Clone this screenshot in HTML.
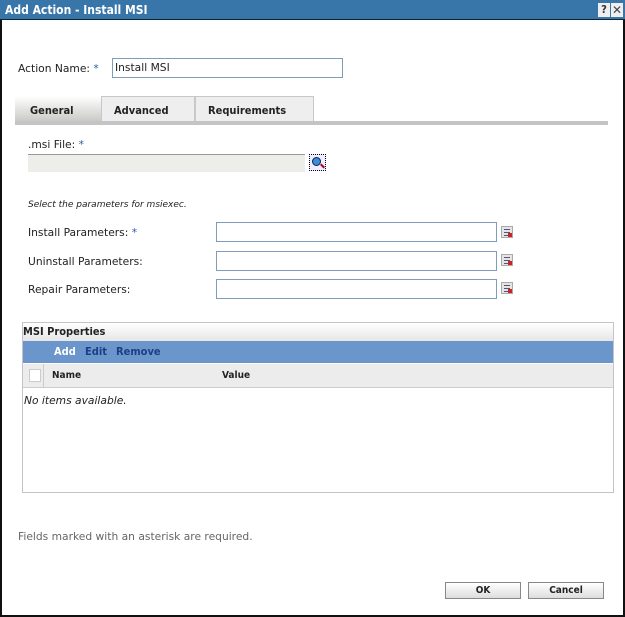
<!DOCTYPE html>
<html><head><style>
*{margin:0;padding:0;box-sizing:border-box}
body{width:625px;height:617px;position:relative;background:#fff;font-family:"DejaVu Sans","Liberation Sans",sans-serif;font-size:10.7px;color:#222;overflow:hidden}
.a{position:absolute}
.inp{position:absolute;border:1px solid #7f9db9;background:#fff}
.b{font-weight:bold;font-family:"DejaVu Sans Condensed","DejaVu Sans",sans-serif;font-size:11px}
.star{color:#2a5aa8}
.ic{position:absolute;width:12px;height:12px;background:#e4e4e4;border:1px solid #aaa}
.ic i{position:absolute;left:2px;width:6px;height:1px;background:#557}
.ic b{position:absolute;right:0;bottom:0;width:4px;height:4px;background:#c22}
</style></head><body>
<div class="a" style="left:0;top:0;width:625px;height:617px;border:2px solid #111;border-top:0"></div>
<div class="a" style="left:0;top:0;width:625px;height:20px;background:#3876aa;border-bottom:1px solid #123"></div>
<div class="a b" style="left:5px;top:3px;color:#fff;font-size:12px">Add Action - Install MSI</div>
<div class="a b" style="left:598px;top:3px;width:12px;height:14px;background:#eee;color:#333;font-size:11px;text-align:center;line-height:14px">?</div>
<div class="a" style="left:611px;top:3px;width:12px;height:14px;background:#eee;color:#444;font-size:12px;text-align:center;line-height:14px">✕</div>

<div class="a" style="left:18px;top:62px">Action Name: <span class="star">*</span></div>
<div class="inp" style="left:112px;top:58px;width:231px;height:20px;padding:2px 2px">Install MSI</div>

<div class="a" style="left:15px;top:96px;width:86px;height:26px;background:linear-gradient(#fff,#c8c8c4);"></div>
<div class="a b" style="left:30px;top:104px">General</div>
<div class="a" style="left:101px;top:96px;width:94px;height:25px;background:#eeeeee;border:1px solid #c8c8c8;border-bottom:0"></div>
<div class="a b" style="left:114px;top:104px">Advanced</div>
<div class="a" style="left:195px;top:96px;width:119px;height:25px;background:#eeeeee;border:1px solid #c8c8c8;border-bottom:0"></div>
<div class="a b" style="left:208px;top:104px">Requirements</div>
<div class="a" style="left:15px;top:121px;width:593px;height:4px;background:#c4c4c4"></div>

<div class="a" style="left:28px;top:138px">.msi File: <span class="star">*</span></div>
<div class="a" style="left:28px;top:154px;width:277px;height:18px;background:#ededea;border-top:1px solid #999"></div>
<div class="a" style="left:309px;top:154px;width:17px;height:17px;border:1px dotted #002;background:#eef"><div class="a" style="left:2px;top:2px;width:9px;height:9px;border-radius:50%;background:#3a8ed8;border:1px solid #124"></div><div class="a" style="left:10px;top:10px;width:5px;height:2px;background:#a02;transform:rotate(45deg)"></div></div>

<div class="a" style="left:28px;top:200px;font-size:9px;font-style:italic">Select the parameters for msiexec.</div>
<div class="a" style="left:28px;top:226px">Install Parameters: <span class="star">*</span></div>
<div class="inp" style="left:216px;top:222px;width:281px;height:20px"></div>
<div class="a" style="left:28px;top:255px">Uninstall Parameters:</div>
<div class="inp" style="left:216px;top:251px;width:281px;height:20px"></div>
<div class="a" style="left:28px;top:283px">Repair Parameters:</div>
<div class="inp" style="left:216px;top:279px;width:281px;height:20px"></div>
<div class="ic" style="left:501px;top:226px"><i style="top:2px"></i><i style="top:5px"></i><i style="top:8px"></i><b></b></div>
<div class="ic" style="left:501px;top:254px"><i style="top:2px"></i><i style="top:5px"></i><i style="top:8px"></i><b></b></div>
<div class="ic" style="left:501px;top:282px"><i style="top:2px"></i><i style="top:5px"></i><i style="top:8px"></i><b></b></div>

<div class="a" style="left:22px;top:322px;width:592px;height:171px;border:1px solid #c4c4c4"></div>
<div class="a" style="left:23px;top:323px;width:590px;height:18px;background:linear-gradient(#fff,#e6e6e6)"></div>
<div class="a b" style="left:23px;top:325px">MSI Properties</div>
<div class="a" style="left:23px;top:341px;width:590px;height:22px;background:#6a96cc"></div>
<div class="a b" style="left:54px;top:345px;color:#fff">Add</div>
<div class="a b" style="left:85px;top:345px;color:#1c3e86">Edit</div>
<div class="a b" style="left:116px;top:345px;color:#1c3e86">Remove</div>
<div class="a" style="left:23px;top:364px;width:590px;height:24px;background:#ececec;border-bottom:1px solid #ccc"></div>
<div class="a" style="left:43px;top:364px;width:1px;height:24px;background:#ccc"></div>
<div class="a" style="left:29px;top:369px;width:12px;height:13px;background:#fff;border:1px solid #ccc"></div>
<div class="a b" style="left:52px;top:370px;font-size:10px">Name</div>
<div class="a b" style="left:222px;top:370px;font-size:10px">Value</div>
<div class="a" style="left:24px;top:394px;font-style:italic">No items available.</div>

<div class="a" style="left:18px;top:530px;color:#666">Fields marked with an asterisk are required.</div>

<div class="a b" style="left:445px;top:582px;width:76px;height:17px;border:1px solid #888;background:linear-gradient(#fff,#ddd);text-align:center;line-height:15px;font-size:10px">OK</div>
<div class="a b" style="left:528px;top:582px;width:76px;height:17px;border:1px solid #888;background:linear-gradient(#fff,#ddd);text-align:center;line-height:15px;font-size:10px">Cancel</div>
</body></html>
